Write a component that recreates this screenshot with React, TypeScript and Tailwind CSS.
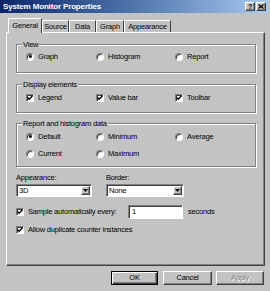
import React from "react";

const raised =
  "border border-t-white border-l-white border-r-[#404040] border-b-[#404040] shadow-[inset_-1px_-1px_0_#808080]";
const sunken =
  "border border-t-[#808080] border-l-[#808080] border-r-white border-b-white shadow-[inset_1px_1px_0_#404040]";

function Radio({ label, checked }: { label: string; checked?: boolean }) {
  return (
    <div className="flex items-center gap-[4px] h-[9px]">
      <span className={`relative w-[8px] h-[8px] rounded-full bg-white ${sunken}`}>
        {checked && <span className="absolute left-[1.5px] top-[1.5px] w-[3px] h-[3px] rounded-full bg-black" />}
      </span>
      <span>{label}</span>
    </div>
  );
}

function Check({ label }: { label: string }) {
  return (
    <div className="flex items-center gap-[4px] h-[9px]">
      <span className={`flex items-center justify-center w-[8px] h-[8px] bg-white ${sunken}`}>
        <svg width="6" height="6" viewBox="0 0 6 6">
          <path d="M0.5 2.5 L2.2 4.3 L5.5 0.8" stroke="#000" strokeWidth="1.3" fill="none" />
        </svg>
      </span>
      <span>{label}</span>
    </div>
  );
}

function Group({ label, className, children }: { label: string; className: string; children: React.ReactNode }) {
  return (
    <div
      className={`relative w-[240px] border border-[#808080] shadow-[inset_1px_1px_0_#fff,1px_1px_0_#fff] ${className}`}
    >
      <span className="absolute left-[5px] -top-[5px] px-[1px] leading-[9px] bg-[#c3c3c3]">{label}</span>
      {children}
    </div>
  );
}

function Select({ value, width }: { value: string; width: string }) {
  return (
    <div className={`flex items-center h-[13px] bg-white ${sunken} ${width}`}>
      <span className="flex-1 pl-[2px] leading-[9px]">{value}</span>
      <span className={`flex items-center justify-center w-[9px] h-[9px] mr-[1px] bg-[#c3c3c3] ${raised}`}>
        <svg width="5" height="3" viewBox="0 0 5 3">
          <path d="M0 0 H5 L2.5 3 Z" fill="#000" />
        </svg>
      </span>
    </div>
  );
}

function Tab({ label, width, active }: { label: string; width: string; active?: boolean }) {
  return (
    <div
      className={`flex items-center justify-center bg-[#c3c3c3] border-l border-t border-r border-l-white border-t-white border-r-[#404040] ${width} ${
        active ? "h-[15px] relative z-10" : "h-[12px] mb-[1px]"
      }`}
    >
      {label}
    </div>
  );
}

function Button({ label, isDefault, disabled }: { label: string; isDefault?: boolean; disabled?: boolean }) {
  return (
    <div
      className={`flex items-center justify-center h-[14px] ${
        isDefault
          ? "border border-black shadow-[inset_1px_1px_0_#fff,inset_-1px_-1px_0_#404040,inset_-2px_-2px_0_#808080]"
          : raised
      } ${disabled ? "text-[#808080] [text-shadow:1px_1px_0_#fff]" : ""}`}
    >
      {label}
    </div>
  );
}

export default function App() {
  return (
    <div className="w-[270px] h-[291px] overflow-hidden bg-[#c3c3c3] text-black text-[7.5px] tracking-[-0.2px] font-['Liberation_Sans',Arial,sans-serif] flex flex-col">
      {/* title bar */}
      <div className="flex items-center w-[268px] h-[13px] pl-[3px] pr-[2px] bg-gradient-to-r from-[#0a246a] to-[#a6caf0]">
        <span className="text-white font-bold text-[8px] tracking-[-0.15px]">System Monitor Properties</span>
        <div className="ml-auto flex gap-[1px]">
          <span className={`flex items-center justify-center w-[10px] h-[9px] bg-[#c3c3c3] font-bold text-[7px] leading-none ${raised}`}>
            ?
          </span>
          <span className={`flex items-center justify-center w-[10px] h-[9px] bg-[#c3c3c3] ${raised}`}>
            <svg width="6" height="5" viewBox="0 0 6 5">
              <path d="M0.5 0.5 L5.5 4.5 M5.5 0.5 L0.5 4.5" stroke="#000" strokeWidth="1.3" />
            </svg>
          </span>
        </div>
      </div>

      {/* tabs */}
      <div className="flex items-end h-[15px] mt-[5px] pl-[8px] -mb-[1px] relative z-10">
        <Tab label="General" width="w-[34px]" active />
        <Tab label="Source" width="w-[27px]" />
        <Tab label="Data" width="w-[27px]" />
        <Tab label="Graph" width="w-[28px]" />
        <Tab label="Appearance" width="w-[47px]" />
      </div>

      {/* panel */}
      <div className="ml-[6px] w-[259px] h-[234px] border border-t-white border-l-white border-r-[#404040] border-b-[#404040] shadow-[inset_-1px_-1px_0_#808080] pl-[9px] flex flex-col">
        <Group label="View" className="mt-[11px] h-[29px]">
          <div className="grid grid-cols-[70px_79px_1fr] pl-[9px] mt-[7px]">
            <Radio label="Graph" checked />
            <Radio label="Histogram" />
            <Radio label="Report" />
          </div>
        </Group>

        <Group label="Display elements" className="mt-[11px] h-[29px]">
          <div className="grid grid-cols-[70px_79px_1fr] pl-[9px] mt-[8px]">
            <Check label="Legend" />
            <Check label="Value bar" />
            <Check label="Toolbar" />
          </div>
        </Group>

        <Group label="Report and histogram data" className="mt-[10px] h-[44px]">
          <div className="grid grid-cols-[70px_79px_1fr] gap-y-[8px] pl-[9px] mt-[8px]">
            <Radio label="Default" checked />
            <Radio label="Minimum" />
            <Radio label="Average" />
            <Radio label="Current" />
            <Radio label="Maximum" />
          </div>
        </Group>

        <div className="flex mt-[6px] gap-[14px]">
          <div className="flex flex-col gap-[2px]">
            <span className="leading-[9px]">Appearance:</span>
            <Select value="3D" width="w-[76px]" />
          </div>
          <div className="flex flex-col gap-[2px]">
            <span className="leading-[9px]">Border:</span>
            <Select value="None" width="w-[78px]" />
          </div>
        </div>

        <div className="flex items-center mt-[8px] h-[14px]">
          <div className="w-[112px]">
            <Check label="Sample automatically every:" />
          </div>
          <div className={`w-[55px] h-[14px] bg-white pl-[3px] flex items-center ${sunken}`}>1</div>
          <span className="ml-[5px]">seconds</span>
        </div>

        <div className="mt-[6px]">
          <Check label="Allow duplicate counter instances" />
        </div>
      </div>

      {/* buttons */}
      <div className="flex mt-[5px] pl-[111px]">
        <div className="w-[47px]">
          <Button label="OK" isDefault />
        </div>
        <div className="w-[49px] ml-[5px]">
          <Button label="Cancel" />
        </div>
        <div className="w-[48px] ml-[4px]">
          <Button label="Apply" disabled />
        </div>
      </div>
    </div>
  );
}
